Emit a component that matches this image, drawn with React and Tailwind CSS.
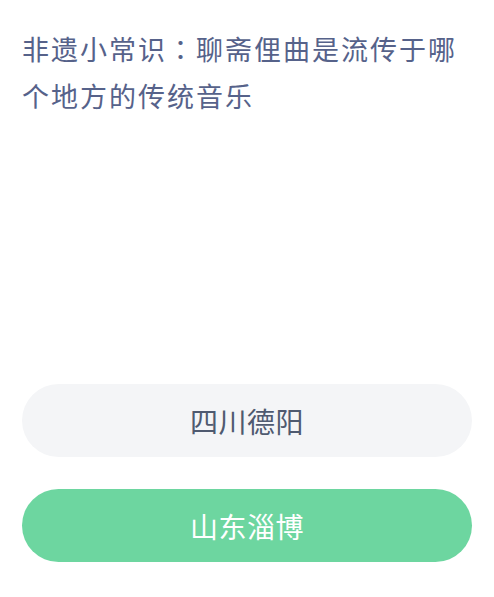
import React from 'react';

const font = { fontFamily: '"Noto Sans CJK SC", "Noto Sans", sans-serif' };

const options = [
  { label: '四川德阳', correct: false },
  { label: '山东淄博', correct: true },
];

const App = () => {
  return (
    <div className="w-[494px] h-[597px] bg-white px-[22px] pt-[25px] flex flex-col" style={font}>
      <h1 className="text-[27px] leading-[47px] tracking-[2px] text-[#56628a] font-normal">
        非遗小常识
        {/* centred full-width colon */}
        <span style={{ fontFamily: '"Noto Sans CJK TC", sans-serif' }}>：</span>
        聊斋俚曲是流传于哪个地方的传统音乐
      </h1>

      <div className="mt-[265px] flex flex-col gap-[32px]">
        {options.map((opt) => (
          <button
            key={opt.label}
            className={`h-[73px] w-full rounded-full flex items-center justify-center text-[28px] tracking-[0.5px] ${
              opt.correct ? 'bg-[#6dd6a0] text-white' : 'bg-[#f4f5f7] text-[#4f5a70]'
            }`}
          >
            {opt.label}
          </button>
        ))}
      </div>
    </div>
  );
};

export default App;
